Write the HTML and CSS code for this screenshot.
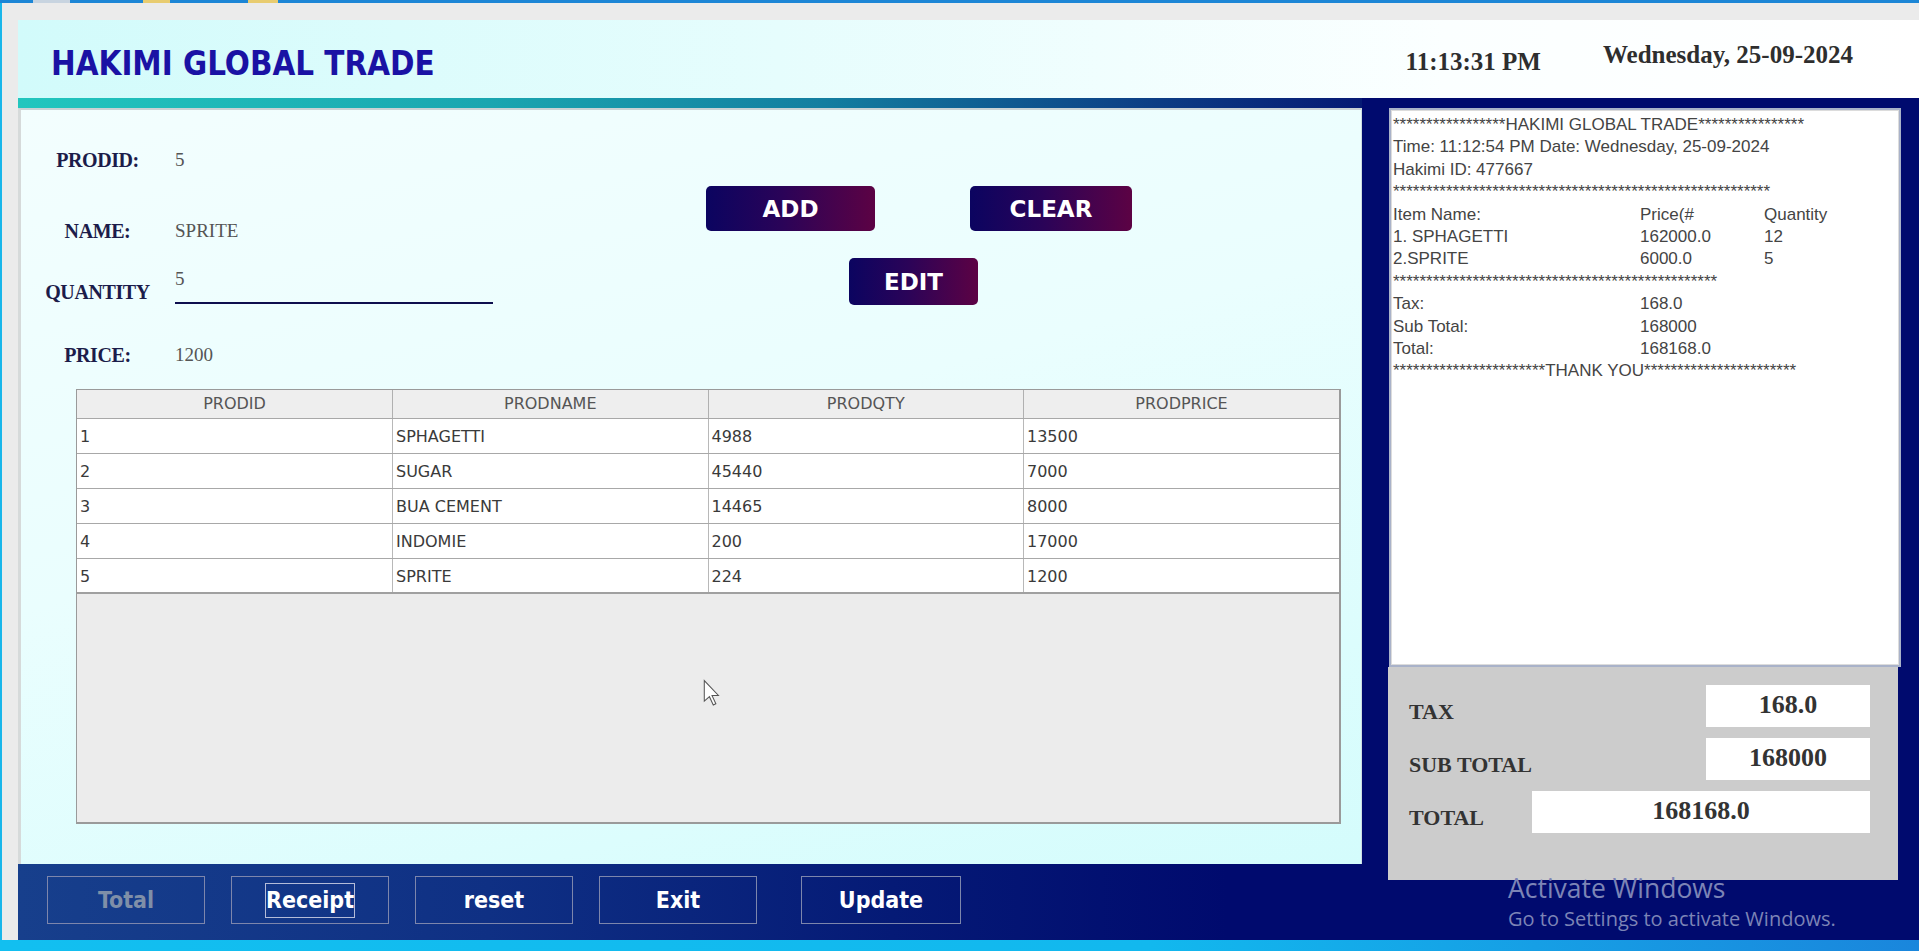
FILE: index.html
```html
<!DOCTYPE html>
<html>
<head>
<meta charset="utf-8">
<title>HAKIMI GLOBAL TRADE</title>
<link rel="stylesheet" href="styles.css">
</head>
<body>
<div class="screen">
  <div class="os-top"><span class="ic ic1"></span><span class="ic ic2"></span><span class="ic ic3"></span></div>
  <div class="frame">
    <div class="window">
      <header class="header">
        <h1 class="title">HAKIMI GLOBAL TRADE</h1>
        <div class="clock">
          <span class="time">11:13:31 PM</span>
          <span class="date">Wednesday, 25-09-2024</span>
        </div>
      </header>
      <div class="main">
        <div class="left">
          <div class="stripe"></div>
          <div class="panel">
            <div class="form-area">
              <div class="fields">
                <div class="field r1"><span class="lbl">PRODID:</span><span class="val">5</span></div>
                <div class="field r2"><span class="lbl">NAME:</span><span class="val">SPRITE</span></div>
                <div class="field r3"><span class="lbl">QUANTITY</span><span class="val input">5</span></div>
                <div class="field r4"><span class="lbl">PRICE:</span><span class="val">1200</span></div>
              </div>
              <div class="actions">
                <div class="act-row">
                  <button class="gbtn add">ADD</button>
                  <button class="gbtn clear">CLEAR</button>
                </div>
                <div class="act-row second">
                  <button class="gbtn edit">EDIT</button>
                </div>
              </div>
            </div>
            <div class="grid-box">
              <table class="grid">
                <thead>
                  <tr><th>PRODID</th><th>PRODNAME</th><th>PRODQTY</th><th>PRODPRICE</th></tr>
                </thead>
                <tbody>
                  <tr><td>1</td><td>SPHAGETTI</td><td>4988</td><td>13500</td></tr>
                  <tr><td>2</td><td>SUGAR</td><td>45440</td><td>7000</td></tr>
                  <tr><td>3</td><td>BUA CEMENT</td><td>14465</td><td>8000</td></tr>
                  <tr><td>4</td><td>INDOMIE</td><td>200</td><td>17000</td></tr>
                  <tr><td>5</td><td>SPRITE</td><td>224</td><td>1200</td></tr>
                </tbody>
              </table>
            </div>
          </div>
          <div class="bottom-bar">
            <button class="sbtn disabled">Total</button>
            <button class="sbtn"><span class="focus">Receipt</span></button>
            <button class="sbtn">reset</button>
            <button class="sbtn">Exit</button>
            <button class="sbtn update">Update</button>
          </div>
        </div>
        <div class="right">
          <div class="receipt">
            <div class="rl">*****************HAKIMI GLOBAL TRADE****************</div>
            <div class="rl">Time: 11:12:54 PM Date: Wednesday, 25-09-2024</div>
            <div class="rl">Hakimi ID: 477667</div>
            <div class="rl">*********************************************************</div>
            <div class="rl cols"><span>Item Name:</span><span>Price(#</span><span>Quantity</span></div>
            <div class="rl cols"><span>1. SPHAGETTI</span><span>162000.0</span><span>12</span></div>
            <div class="rl cols"><span>2.SPRITE</span><span>6000.0</span><span>5</span></div>
            <div class="rl">*************************************************</div>
            <div class="rl cols"><span>Tax:</span><span>168.0</span><span></span></div>
            <div class="rl cols"><span>Sub Total:</span><span>168000</span><span></span></div>
            <div class="rl cols"><span>Total:</span><span>168168.0</span><span></span></div>
            <div class="rl">***********************THANK YOU***********************</div>
          </div>
          <div class="totals">
            <div class="trow"><span class="tlbl">TAX</span><span class="tbox">168.0</span></div>
            <div class="trow"><span class="tlbl">SUB TOTAL</span><span class="tbox">168000</span></div>
            <div class="trow"><span class="tlbl">TOTAL</span><span class="tbox wide">168168.0</span></div>
          </div>
        </div>
      </div>
    </div>
  </div>
  <div class="os-bottom"></div>
  <div class="watermark">
    <div class="wm1">Activate Windows</div>
    <div class="wm2">Go to Settings to activate Windows.</div>
  </div>
  <svg class="cursor" width="18" height="29" viewBox="0 0 14 22">
    <path d="M1 1 L1 17 L5 13.5 L8 20 L10 19 L7 12.5 L12 12.5 Z" fill="#ffffff" stroke="#555555" stroke-width="0.8"/>
  </svg>
</div>
</body>
</html>
```

FILE: styles.css
```css
* { box-sizing: border-box; }
html, body { margin: 0; padding: 0; }
body { font-family: "Liberation Sans", Arial, sans-serif; background: #ebebeb; }

.screen {
  width: 1919px;
  height: 951px;
  position: relative;
  overflow: hidden;
  background: #ebebeb;
}

.os-top {
  height: 3px;
  background: #1c86d6;
  display: flex;
}
.ic { display: block; height: 3px; }
.ic1 { margin-left: 33px; width: 37px; background: #c8d4e0; }
.ic2 { margin-left: 73px; width: 27px; background: #e8cc70; }
.ic3 { margin-left: 78px; width: 30px; background: #e8cc70; }

.frame {
  height: 937px;
  border-left: 2px solid #19b6ea;
  padding: 17px 0 0 16px;
  display: flex;
}

.window {
  flex: 1;
  display: flex;
  flex-direction: column;
}

/* Header */
.header {
  height: 78px;
  background: linear-gradient(to right, #d2fbfb 0%, #e6fdfd 40%, #fbffff 75%, #ffffff 100%);
  display: flex;
  align-items: center;
  justify-content: space-between;
}
.title {
  margin: 9px 0 0 33px;
  font-family: "DejaVu Sans Condensed", "DejaVu Sans", sans-serif;
  font-stretch: condensed;
  font-weight: bold;
  font-size: 32.8px;
  color: #1a12a4;
  letter-spacing: 0;
}
.clock {
  display: flex;
  align-items: flex-start;
  margin-right: 66px;
  font-family: "Liberation Serif", "Times New Roman", serif;
  font-weight: bold;
  font-size: 25px;
  color: #2e2e2e;
}
.time { margin-top: 6px; }
.date { margin-left: 62px; margin-top: -1px; }

/* Main */
.main {
  flex: 1;
  display: flex;
  background: #000a6e;
}

.left {
  width: 1344px;
  display: flex;
  flex-direction: column;
  background: linear-gradient(to right, #173f8c 0%, #0f3084 35%, #051a76 65%, #000a6e 90%);
}

.stripe {
  height: 10px;
  background: linear-gradient(to right, #22c6be 0%, #1aa6b0 35%, #137ea0 60%, #0c3c84 85%, #061a74 100%);
}

.panel {
  height: 756px;
  border-left: 3px solid #d6dada;
  border-top: 2px solid #c9d2d4;
  border-right: 1px solid #cfdde2;
  background: linear-gradient(165deg, #f3fefe 0%, #eafefe 45%, #dcfdfd 80%, #d4fcfc 100%);
}

.form-area {
  height: 279px;
  display: flex;
}

.fields {
  width: 685px;
  display: flex;
  flex-direction: column;
  padding-top: 30px;
}
.field {
  display: flex;
  align-items: center;
  height: 40px;
}
.r2 { margin-top: 31px; }
.r3 { margin-top: 21px; }
.r4 { margin-top: 23px; }

.lbl {
  margin-left: 19px;
  width: 115px;
  text-align: center;
  font-family: "Liberation Serif", "Times New Roman", serif;
  font-weight: bold;
  font-size: 20px;
  letter-spacing: -0.4px;
  color: #1c1c4a;
}
.val {
  margin-left: 20px;
  font-family: "Liberation Serif", "Times New Roman", serif;
  font-size: 19px;
  color: #555555;
}
.val.input {
  align-self: flex-start;
  width: 318px;
  height: 32px;
  line-height: 14px;
  border-bottom: 2px solid #0e0e4e;
}

.actions {
  padding-top: 76px;
}
.act-row {
  display: flex;
  gap: 95px;
}
.act-row.second {
  margin-top: 27px;
  margin-left: 143px;
}

.gbtn {
  height: 45px;
  border: none;
  border-radius: 5px;
  background: linear-gradient(to right, #0b0460 0%, #2a0358 45%, #5c0244 100%);
  color: #ffffff;
  font-family: "DejaVu Sans", sans-serif;
  font-weight: bold;
  font-size: 23px;
  padding: 0;
}
.gbtn.add { width: 169px; }
.gbtn.clear { width: 162px; }
.gbtn.edit { width: 129px; height: 47px; }

/* Table */
.grid-box {
  margin-left: 55px;
  width: 1265px;
  height: 435px;
  background: #ececec;
  border: 1px solid #9a9a9a;
  border-right-width: 2px;
  border-bottom-width: 2px;
}
.grid {
  width: 100%;
  border-collapse: collapse;
  table-layout: fixed;
  font-family: "DejaVu Sans", sans-serif;
  font-size: 16px;
  color: #3a3a3a;
}
.grid th {
  height: 28px;
  background: #eeeeee;
  font-weight: normal;
  color: #555555;
  text-align: center;
  border-right: 1px solid #b0b0b0;
  border-bottom: 1px solid #a8a8a8;
  padding: 0;
}
.grid td {
  height: 35px;
  background: #ffffff;
  text-align: left;
  padding: 2px 0 0 3px;
  border-right: 1px solid #b8b8b8;
  border-bottom: 1px solid #a8a8a8;
}
.grid th:last-child, .grid td:last-child { border-right: none; }
.grid tbody tr:last-child td { border-bottom: 2px solid #a0a0a0; }

/* Bottom bar */
.bottom-bar {
  flex: 1;
  display: flex;
  align-items: flex-start;
  padding: 12px 0 0 29px;
}
.sbtn {
  width: 158px;
  height: 48px;
  margin-right: 26px;
  background: transparent;
  border: 1px solid #7d86ac;
  color: #ffffff;
  font-family: "DejaVu Sans Condensed", "DejaVu Sans", sans-serif;
  font-stretch: condensed;
  font-weight: bold;
  font-size: 23px;
  padding: 0;
  display: flex;
  align-items: center;
  justify-content: center;
}
.sbtn.disabled { color: #7f8fa8; }
.sbtn.update { margin-left: 18px; width: 160px; }
.focus {
  border: 1px solid #b4bcd8;
  padding: 2px 0 3px;
  line-height: 28px;
}

/* Right column */
.right {
  flex: 1;
  padding: 10px 0 0 27px;
  display: flex;
  flex-direction: column;
}
.receipt {
  width: 512px;
  height: 559px;
  background: #ffffff;
  border: 2px solid #a9b2c9;
  box-shadow: inset 0 0 0 1px #dcdcdc;
  padding: 4px 2px 0 2px;
  font-family: "Liberation Sans", Arial, sans-serif;
  font-size: 17px;
  line-height: 22.4px;
  color: #444444;
  white-space: nowrap;
  overflow: hidden;
}
.rl { height: 22.4px; }
.cols {
  display: grid;
  grid-template-columns: 247px 124px 1fr;
}

.totals {
  margin-left: -1px;
  width: 510px;
  height: 213px;
  background: #cccccc;
  padding: 18px 28px 0 21px;
  display: flex;
  flex-direction: column;
  gap: 11px;
}
.trow {
  height: 42px;
  display: flex;
  justify-content: space-between;
  align-items: flex-start;
}
.tlbl {
  padding-top: 14px;
  font-family: "Liberation Serif", "Times New Roman", serif;
  font-weight: bold;
  font-size: 22px;
  color: #333333;
}
.tbox {
  width: 164px;
  height: 42px;
  background: #ffffff;
  text-align: center;
  line-height: 40px;
  font-family: "Liberation Serif", "Times New Roman", serif;
  font-weight: bold;
  font-size: 26px;
  color: #333333;
}
.tbox.wide { width: 338px; }

.os-bottom {
  height: 11px;
  background: linear-gradient(to right, #12bff0 0%, #12b8ee 60%, #1a86dc 100%);
}

/* Overlays */
.watermark {
  position: absolute;
  left: 1508px;
  top: 872px;
  font-family: "Open Sans", "Noto Sans", sans-serif;
  color: #7c84b6;
}
.wm1 { font-size: 26.5px; line-height: 32px; }
.wm2 { font-size: 20px; line-height: 26px; margin-top: 2px; }

.cursor {
  position: absolute;
  left: 703px;
  top: 679px;
}
```
